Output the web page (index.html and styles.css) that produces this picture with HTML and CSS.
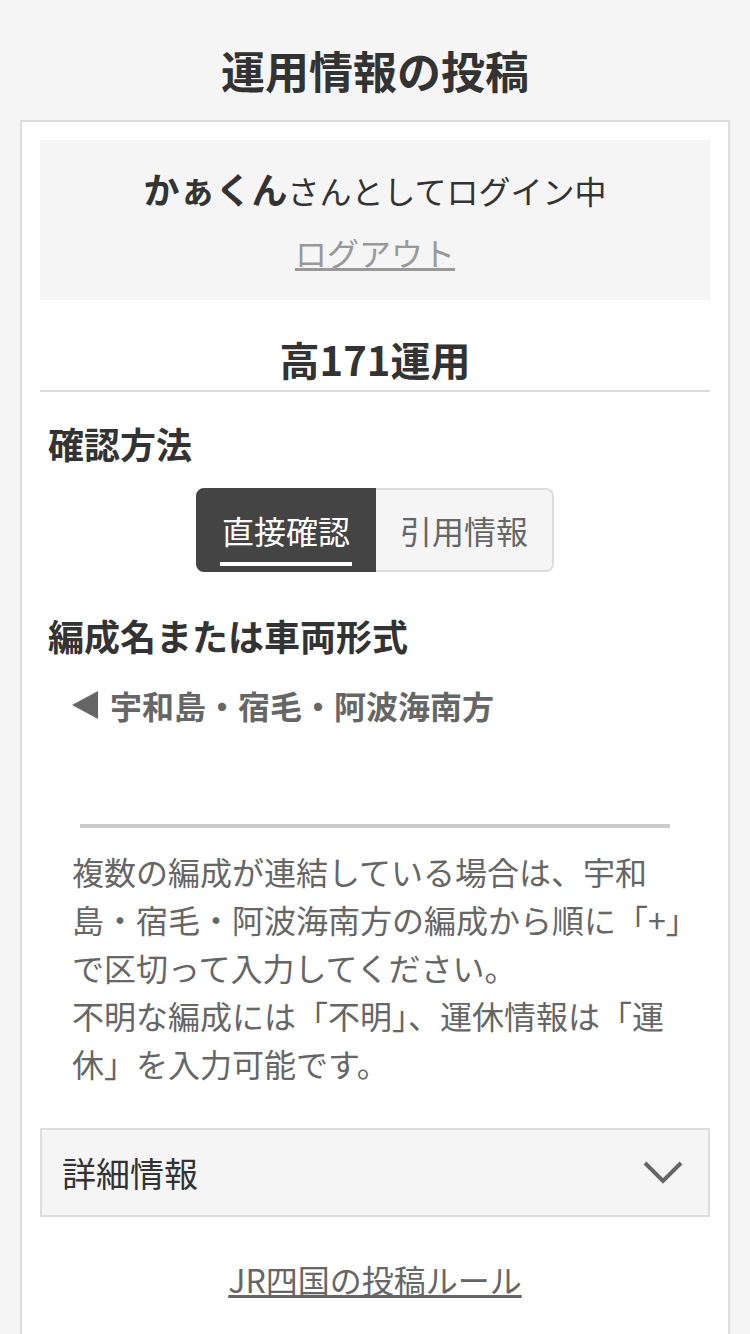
FILE: index.html
```html
<!DOCTYPE html>
<html lang="ja">
<head>
    <meta charset="UTF-8">
    <meta name="viewport" content="width=device-width, initial-scale=1.0">
    <title>運用情報の投稿</title>
    <link rel="stylesheet" href="styles.css">
</head>
<body>
    <div class="page">
        <h1>運用情報の投稿</h1>
        <div class="card">
            <div class="login-box">
                <p class="login-name"><strong>かぁくん</strong>さんとしてログイン中</p>
                <p class="logout"><a href="#">ログアウト</a></p>
            </div>

            <h2 class="run-title">高171運用</h2>

            <h3 class="label">確認方法</h3>
            <div class="segment">
                <button class="seg-btn active"><span>直接確認</span></button>
                <button class="seg-btn"><span>引用情報</span></button>
            </div>

            <h3 class="label label-formation">編成名または車両形式</h3>
            <div class="direction">
                <svg width="26" height="28" viewBox="0 0 26 28"><polygon points="26,0 26,28 0,14" fill="#666"/></svg>
                <span>宇和島・宿毛・阿波海南方</span>
            </div>
            <input class="formation-input" type="text">
            <p class="help">複数の編成が連結している場合は、宇和<br>島・宿毛・阿波海南方の編成から順に「+」で区切って入力してください。<br>不明な編成には「不明」、運休情報は「運休」を入力可能です。</p>

            <div class="details">
                <span>詳細情報</span>
                <svg width="40" height="24" viewBox="0 0 40 24"><polyline points="2,2 20,20 38,2" fill="none" stroke="#666" stroke-width="4"/></svg>
            </div>

            <p class="rules"><a href="#">JR四国の投稿ルール</a></p>
        </div>
    </div>
</body>
</html>
```

FILE: styles.css
```css
body {
    margin: 0;
    background-color: #f5f5f5;
    font-family: "Noto Sans CJK JP", "Noto Sans", sans-serif;
    color: #333;
}
.page {
    padding: 37px 20px 0;
}
h1 {
    margin: 0 0 17px;
    font-size: 44px;
    line-height: 66px;
    text-align: center;
}
.card {
    background-color: #fff;
    border: 2px solid #ddd;
    border-bottom: none;
    padding: 18px 18px 40px;
}
.login-box {
    background-color: #f5f5f5;
    padding: 24px 0 24px;
    text-align: center;
}
.login-box p {
    margin: 0;
    font-size: 32px;
    line-height: 48px;
}
.login-name strong {
    font-size: 36px;
}
.logout {
    margin-top: 14px !important;
}
.logout a {
    color: #999;
}
.run-title {
    margin: 29px 0 0;
    padding-bottom: 1px;
    border-bottom: 2px solid #ddd;
    font-size: 40px;
    line-height: 60px;
    text-align: center;
}
.label {
    margin: 24px 0 0;
    padding-left: 8px;
    font-size: 36px;
    line-height: 54px;
}
.label-formation {
    margin-top: 36px;
}
.segment {
    display: flex;
    justify-content: center;
    margin-top: 18px;
}
.seg-btn {
    font-family: inherit;
    font-size: 32px;
    line-height: 48px;
    padding: 16px 22px 4px;
    background-color: #f5f5f5;
    color: #666;
    border: 2px solid #ddd;
    border-left: none;
    border-radius: 0 8px 8px 0;
}
.seg-btn span {
    display: block;
    padding: 0 2px 8px;
    border-bottom: 4px solid transparent;
}
.seg-btn.active {
    background-color: #444;
    color: #fff;
    border: 2px solid #444;
    border-radius: 8px 0 0 8px;
}
.seg-btn.active span {
    border-bottom-color: #fff;
}
.direction {
    display: flex;
    align-items: center;
    gap: 12px;
    margin-top: 19px;
    padding-left: 32px;
    font-size: 32px;
    line-height: 48px;
    font-weight: bold;
    color: #666;
}
.formation-input {
    display: block;
    box-sizing: border-box;
    width: 590px;
    height: 99px;
    margin: 0 40px;
    border: none;
    border-bottom: 4px solid #ccc;
    background: transparent;
    outline: none;
}
.help {
    margin: 19px 18px 0 32px;
    font-size: 32px;
    line-height: 48px;
    color: #666;
}
.details {
    display: flex;
    justify-content: space-between;
    align-items: center;
    height: 85px;
    margin-top: 41px;
    padding: 0 25px 0 20px;
    background-color: #f5f5f5;
    border: 2px solid #ddd;
    font-size: 34px;
}
.rules {
    margin: 38px 0 0;
    text-align: center;
    font-size: 32px;
    line-height: 48px;
}
.rules a {
    color: #666;
}
```
